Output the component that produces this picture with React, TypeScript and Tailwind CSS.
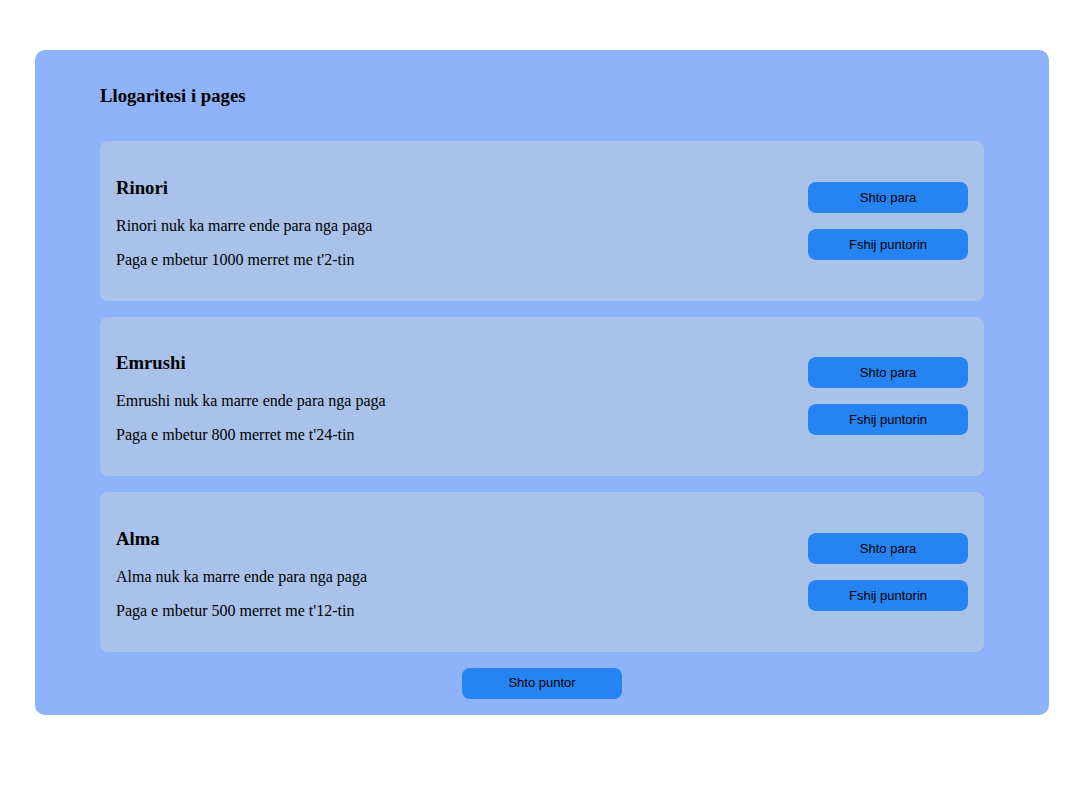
const workers = [
  { name: "Rinori", left: 1000, day: 2 },
  { name: "Emrushi", left: 800, day: 24 },
  { name: "Alma", left: 500, day: 12 },
];

function WorkerCard({ name, left, day }: { name: string; left: number; day: number }) {
  return (
    <div className="flex items-center justify-between rounded-lg bg-[#a8c2e9] p-4">
      <div className="pt-[19.5px] pb-4">
        <h3 className="text-[18.72px] font-bold leading-[21px]">{name}</h3>
        <p className="mt-[19px] text-base leading-[18px]">
          {name} nuk ka marre ende para nga paga
        </p>
        <p className="mt-4 text-base leading-[18px]">
          Paga e mbetur {left} merret me t'{day}-tin
        </p>
      </div>
      <div className="flex flex-col gap-4">
        <button className="h-[31px] w-40 rounded-lg bg-[#2684f2] font-['Liberation_Sans',Arial,sans-serif] text-[13px] text-black">
          Shto para
        </button>
        <button className="h-[31px] w-40 rounded-lg bg-[#2684f2] font-['Liberation_Sans',Arial,sans-serif] text-[13px] text-black">
          Fshij puntorin
        </button>
      </div>
    </div>
  );
}

export default function App() {
  return (
    <div className="min-h-screen bg-white pt-[50px] pl-[35px] font-['Liberation_Serif','Times_New_Roman',serif] text-black">
      <div className="w-[1014px] rounded-[10px] bg-[#8fb3fa] px-[65px] pt-[35px] pb-4">
        <h1 className="mb-[34px] text-[18.72px] font-bold leading-[22px]">Llogaritesi i pages</h1>
        <div className="flex flex-col gap-4">
          {workers.map((w) => (
            <WorkerCard key={w.name} {...w} />
          ))}
        </div>
        <div className="mt-4 flex justify-center">
          <button className="h-[31px] w-40 rounded-lg bg-[#2684f2] font-['Liberation_Sans',Arial,sans-serif] text-[13px] text-black">
            Shto puntor
          </button>
        </div>
      </div>
    </div>
  );
}
